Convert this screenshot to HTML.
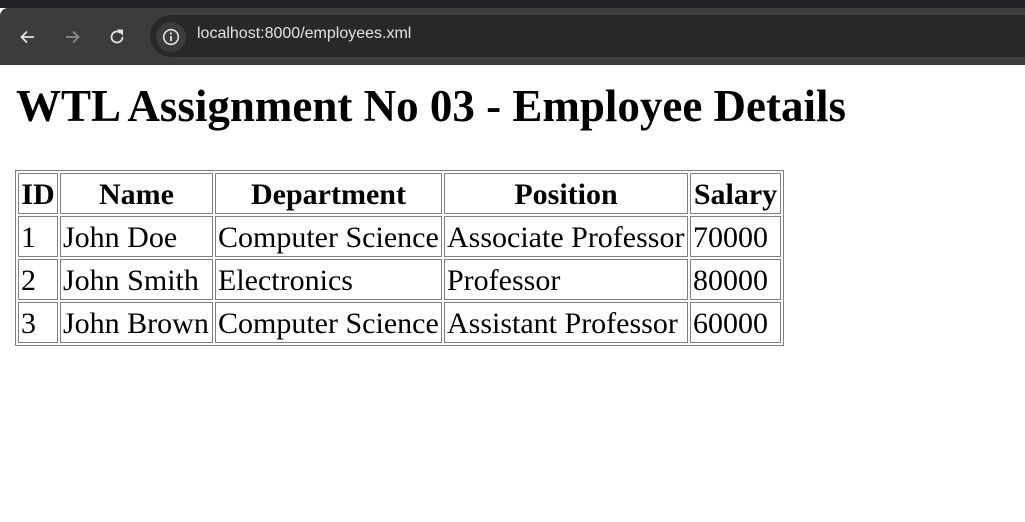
<!DOCTYPE html>
<html><head><style>
body{margin:0;width:1025px;height:522px;overflow:hidden;background:#fff;font-family:"Liberation Serif",serif;}
.top{height:8px;background:#202124;}
.bar{height:57px;background:#3c3c3c;position:relative;border-top-left-radius:8px;}
.pill{position:absolute;left:150px;top:7px;right:-20px;height:42px;border-radius:21px;background:#282828;}
.info{position:absolute;left:156px;top:14px;width:30px;height:30px;border-radius:15px;background:#3c3c3c;}
.url{position:absolute;left:197px;top:17px;color:#e3e3e3;font:16px "Liberation Sans",sans-serif;}
h1{position:absolute;left:16px;top:80px;margin:0;font-size:45px;font-weight:bold;white-space:nowrap;}
table{position:absolute;left:15px;top:170px;border:1px solid #808080;border-spacing:2px;table-layout:fixed;font-size:30px;}
td,th{border:1px solid #808080;padding:2px 2px 0 2px;height:41px;box-sizing:border-box;white-space:nowrap;overflow:visible;line-height:34px;}
td{text-align:left;}
</style></head><body>
<div class="top"></div>
<div class="bar">
<svg style="position:absolute;left:18px;top:19px" width="20" height="20" viewBox="0 0 20 20"><path d="M16 10H4M9 4.5L3.5 10 9 15.5" stroke="#e3e3e3" stroke-width="1.8" fill="none"/></svg>
<svg style="position:absolute;left:62px;top:19px" width="20" height="20" viewBox="0 0 20 20"><path d="M4 10H16M11 4.5L16.5 10 11 15.5" stroke="#8a8a8a" stroke-width="1.8" fill="none"/></svg>
<svg style="position:absolute;left:107px;top:19px" width="20" height="20" viewBox="0 0 20 20"><path d="M15.5 10A5.5 5.5 0 1 1 13.5 5.8" stroke="#e3e3e3" stroke-width="1.8" fill="none"/><path d="M11 3H15.5V7.5Z" fill="#e3e3e3" stroke="#e3e3e3" stroke-width="1"/></svg>
<div class="pill"></div><div class="info"></div>
<svg style="position:absolute;left:162px;top:20px" width="18" height="18" viewBox="0 0 18 18"><circle cx="9" cy="9" r="7.3" stroke="#e3e3e3" stroke-width="1.6" fill="none"/><path d="M9 8V13" stroke="#e3e3e3" stroke-width="1.8"/><circle cx="9" cy="5.5" r="1.1" fill="#e3e3e3"/></svg>
<div class="url">localhost:8000/employees.xml</div>
</div>
<h1>WTL Assignment No 03 - Employee Details</h1>
<table>
<colgroup><col style="width:40px"><col style="width:153px"><col style="width:227px"><col style="width:244px"><col style="width:91px"></colgroup>
<tr><th>ID</th><th>Name</th><th>Department</th><th>Position</th><th>Salary</th></tr>
<tr><td>1</td><td>John Doe</td><td>Computer Science</td><td>Associate Professor</td><td>70000</td></tr>
<tr><td>2</td><td>John Smith</td><td>Electronics</td><td>Professor</td><td>80000</td></tr>
<tr><td>3</td><td>John Brown</td><td>Computer Science</td><td>Assistant Professor</td><td>60000</td></tr>
</table>
</body></html>
